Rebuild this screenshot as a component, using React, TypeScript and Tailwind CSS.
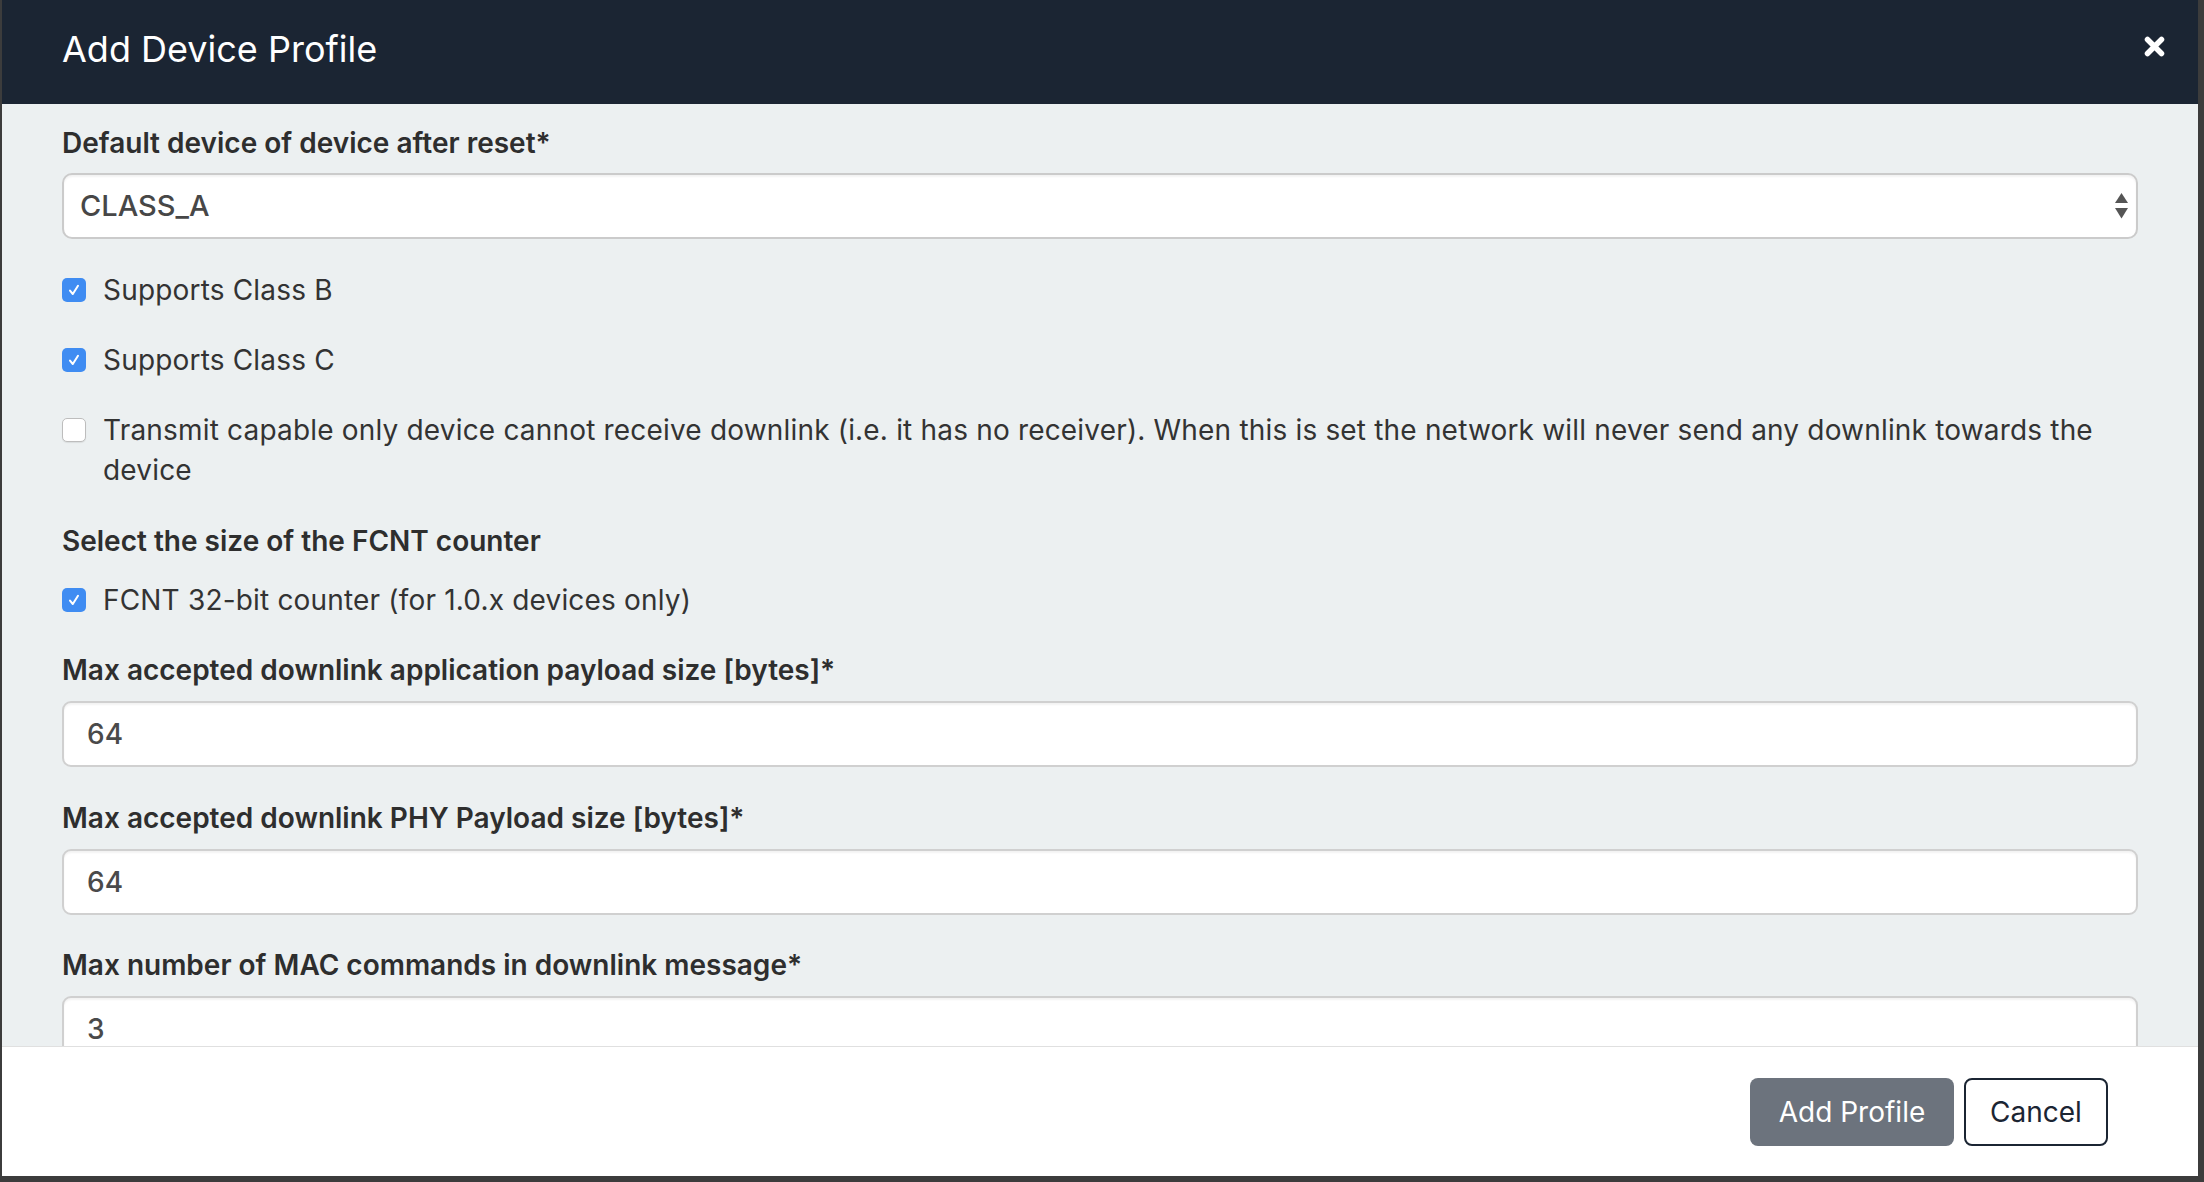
import React from 'react';

function CheckBox({ checked }: { checked: boolean }) {
  if (checked) {
    return (
      <span className="mt-[8px] flex h-[24px] w-[24px] flex-none items-center justify-center rounded-[5px] bg-[#3f8cf2]">
        <svg width="16" height="16" viewBox="0 0 16 16" fill="none">
          <path d="M4 8.6 L6.8 12 L12 3.8" stroke="white" strokeWidth="2" strokeLinecap="round" strokeLinejoin="round" />
        </svg>
      </span>
    );
  }
  return (
    <span className="mt-[8px] h-[24px] w-[24px] flex-none rounded-[5px] border-[1.5px] border-[#bdbdbd] bg-white shadow-[0_1px_1px_rgba(0,0,0,0.08)]" />
  );
}

function CheckRow({ checked, children }: { checked: boolean; children: React.ReactNode }) {
  return (
    <div className="flex items-start gap-[17px]">
      <CheckBox checked={checked} />
      <span className="text-[28px] leading-[40px] tracking-[0.18px] text-[#333]">{children}</span>
    </div>
  );
}

function Label({ children }: { children: React.ReactNode }) {
  return <div className="text-[28px] leading-[36px] font-semibold text-[#2e2e2e]">{children}</div>;
}

function TextInput({ value }: { value: string }) {
  return (
    <div className="mt-[13px] flex h-[66px] items-center rounded-[9px] border-2 border-[#d0d0d0] bg-white pl-[23px] shadow-[inset_0_2px_2px_rgba(0,0,0,0.05)]">
      <span className="text-[28px] font-medium text-[#4a4a4a]">{value}</span>
    </div>
  );
}

export default function App() {
  return (
    <div className="h-[1182px] w-[2204px] overflow-hidden bg-[#3c3c3c] font-['Inter',sans-serif]">
      <div className="ml-[2px] flex h-[1176px] w-[2196px] flex-col bg-white">
        {/* header */}
        <div className="flex h-[104px] flex-none items-center justify-between bg-[#1b2533] pl-[60px] pr-[32px]">
          <h2 className="mb-[6px] text-[36px] font-normal text-white">Add Device Profile</h2>
          <button className="mb-[12px] flex h-[24px] w-[24px] items-center justify-center">
            <svg width="21" height="21" viewBox="0 0 21 21">
              <path d="M3.5 3.5 L17.5 17.5 M17.5 3.5 L3.5 17.5" stroke="white" strokeWidth="5.5" strokeLinecap="round" />
            </svg>
          </button>
        </div>

        {/* body */}
        <div className="h-[943px] flex-none overflow-hidden border-b border-[#e0e0e0] bg-[#ecf0f1] px-[60px] pt-[21px]">
          <Label>Default device of device after reset*</Label>
          <div className="relative mt-[12px] flex h-[66px] items-center rounded-[10px] border-2 border-[#cbcbcb] bg-white pl-[16px] shadow-[inset_0_2px_2px_rgba(0,0,0,0.05)]">
            <span className="text-[29px] font-medium text-[#474747]">CLASS_A</span>
            <svg className="absolute right-[8px] top-[18px]" width="13" height="27" viewBox="0 0 13 27">
              <path d="M6.5 0 L13 10 L0 10 Z" fill="#555" />
              <path d="M0 15 L13 15 L6.5 25.5 Z" fill="#555" />
            </svg>
          </div>

          <div className="mt-[31px] flex flex-col gap-[30px]">
            <CheckRow checked>Supports Class B</CheckRow>
            <CheckRow checked>Supports Class C</CheckRow>
            <CheckRow checked={false}>
              Transmit capable only device cannot receive downlink (i.e. it has no receiver). When this is set the network will never send any downlink towards the device
            </CheckRow>
          </div>

          <div className="mt-[33px]">
            <Label>Select the size of the FCNT counter</Label>
          </div>
          <div className="mt-[21px]">
            <CheckRow checked>FCNT 32-bit counter (for 1.0.x devices only)</CheckRow>
          </div>

          <div className="mt-[32px]">
            <Label>Max accepted downlink application payload size [bytes]*</Label>
            <TextInput value="64" />
          </div>
          <div className="mt-[33px]">
            <Label>Max accepted downlink PHY Payload size [bytes]*</Label>
            <TextInput value="64" />
          </div>
          <div className="mt-[32px]">
            <Label>Max number of MAC commands in downlink message*</Label>
            <TextInput value="3" />
          </div>
        </div>

        {/* footer */}
        <div className="flex flex-1 items-center justify-end gap-[10px] pr-[90px]">
          <button className="h-[68px] w-[204px] rounded-[8px] bg-[#6c737d] text-[28px] text-white">Add Profile</button>
          <button className="h-[68px] w-[144px] rounded-[8px] border-2 border-[#1b2533] bg-white text-[28px] text-[#1b2533]">Cancel</button>
        </div>
      </div>
    </div>
  );
}
